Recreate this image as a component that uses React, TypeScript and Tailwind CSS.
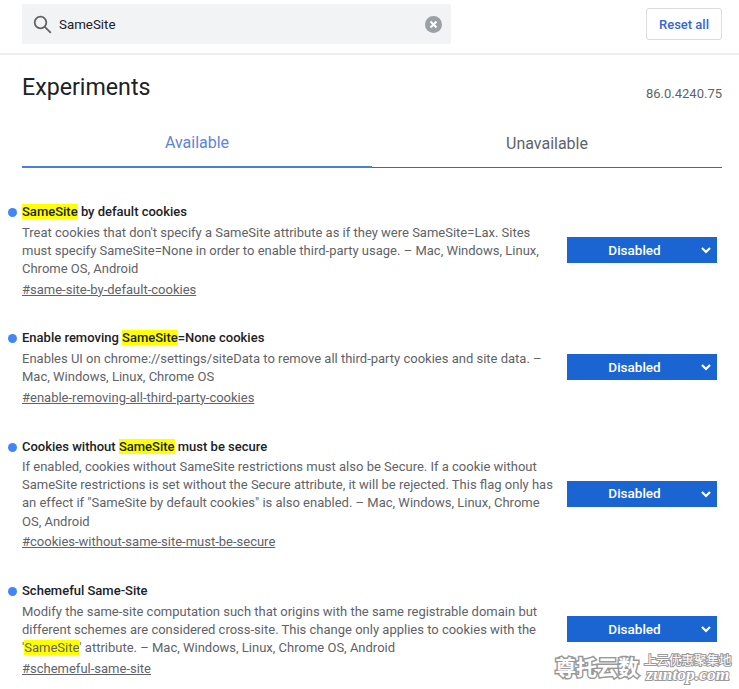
const flags = [
  {
    title: <><mark className="bg-[#ffff00] text-[#202124]">SameSite</mark> by default cookies</>,
    desc: <>Treat cookies that don't specify a SameSite attribute as if they were SameSite=Lax. Sites must specify SameSite=None in order to enable third-party usage. – Mac, Windows, Linux, Chrome OS, Android</>,
    link: "#same-site-by-default-cookies",
  },
  {
    title: <>Enable removing <mark className="bg-[#ffff00] text-[#202124]">SameSite</mark>=None cookies</>,
    desc: <>Enables UI on chrome://settings/siteData to remove all third-party cookies and site data. – Mac, Windows, Linux, Chrome OS</>,
    link: "#enable-removing-all-third-party-cookies",
  },
  {
    title: <>Cookies without <mark className="bg-[#ffff00] text-[#202124]">SameSite</mark> must be secure</>,
    desc: <>If enabled, cookies without SameSite restrictions must also be Secure. If a cookie without SameSite restrictions is set without the Secure attribute, it will be rejected. This flag only has an effect if "SameSite by default cookies" is also enabled. – Mac, Windows, Linux, Chrome OS, Android</>,
    link: "#cookies-without-same-site-must-be-secure",
  },
  {
    title: <>Schemeful Same-Site</>,
    desc: <>Modify the same-site computation such that origins with the same registrable domain but different schemes are considered cross-site. This change only applies to cookies with the '<mark className="bg-[#ffff00] text-[#5f6368]">SameSite</mark>' attribute. – Mac, Windows, Linux, Chrome OS, Android</>,
    link: "#schemeful-same-site",
  },
];

function FlagRow({ flag }: { flag: (typeof flags)[number] }) {
  return (
    <div className="flex items-center">
      <div className="w-[533px] shrink-0">
        <div className="relative text-[13px] leading-[18.2px] font-medium text-[#202124]">
          <span className="absolute left-[-14px] top-[5px] h-[9px] w-[9px] rounded-full bg-[#4285f4]" />
          {flag.title}
        </div>
        <p className="mt-[2.3px] text-[13px] leading-[18.2px] text-[#5f6368]">{flag.desc}</p>
        <a className="mt-[2.4px] block text-[13px] leading-[18.2px] text-[#5f6368] underline">{flag.link}</a>
      </div>
      <div className="mb-[2px] ml-[12px] flex h-[26px] w-[150px] items-center bg-[#1a65d1] text-[13.5px] font-medium text-white">
        <span className="flex-1 pl-[14px] text-center">Disabled</span>
        <svg className="mr-[5px] ml-[12px] h-[12px] w-[12px]" viewBox="0 0 12 12" fill="none" stroke="white" strokeWidth="2.2">
          <path d="M2 4l4 4 4-4" />
        </svg>
      </div>
    </div>
  );
}

export default function App() {
  return (
    <div className="relative h-[689px] w-[739px] overflow-hidden bg-white font-['Roboto',sans-serif]">
      <header className="flex h-[55px] items-start justify-between border-b-2 border-[#eeeeee] pl-[22px] pr-[17px] pt-[4px]">
        <div className="flex h-[40px] w-[429px] items-center rounded-[2px] bg-[#f1f3f4] pl-[11px] pr-[9px]">
          <svg className="h-[19px] w-[19px]" viewBox="0 0 19 19" fill="none" stroke="#5f6368" strokeWidth="1.8">
            <circle cx="7.5" cy="7.5" r="5.8" />
            <path d="M11.8 11.8l6 6" />
          </svg>
          <span className="ml-[7px] flex-1 pt-[1px] text-[13.33px] text-[#202124]">SameSite</span>
          <svg className="mt-[1px] h-[17px] w-[17px]" viewBox="0 0 17 17">
            <circle cx="8.5" cy="8.5" r="8.5" fill="#9aa0a6" />
            <path d="M5.5 5.5l6 6M11.5 5.5l-6 6" stroke="white" strokeWidth="2" />
          </svg>
        </div>
        <button className="mt-[4px] h-[32px] w-[76px] rounded-[3px] border border-[#dadce0] pt-[1px] text-[13px] font-medium text-[#3367d6]">
          Reset all
        </button>
      </header>

      <main className="pl-[22px] pr-[17px]">
        <div className="mt-[18px] flex h-[30px] items-end justify-between">
          <h1 className="self-start text-[23.2px] leading-[28px] text-[#202124]">Experiments</h1>
          <span className="text-[13px] leading-[18px] text-[#5f6368]">86.0.4240.75</span>
        </div>

        <div className="mt-[17px] flex h-[48px] w-[700px]">
          <div className="flex w-[350px] items-start justify-center border-b-2 border-[#4a7fd4] pt-[13px] text-[16px] leading-[20px] text-[#5c85d6]">
            Available
          </div>
          <div className="flex h-[48px] w-[350px] items-start justify-center border-b border-[#5f6368] pt-[14px] text-[16px] leading-[20px] text-[#5f6368]">
            Unavailable
          </div>
        </div>

        <div className="mt-[35px] flex flex-col gap-[30.7px]">
          {flags.map((flag) => (
            <FlagRow key={flag.link} flag={flag} />
          ))}
        </div>
      </main>

      {/* site watermark */}
      <div className="absolute left-[555px] top-[651px] flex items-center text-white">
        <span className="font-['Noto_Sans_CJK_SC',sans-serif] text-[21px] font-bold leading-[30px] [-webkit-text-stroke:3px_#999999] [paint-order:stroke_fill]">尊托云数</span>
        <div className="ml-[5px] flex flex-col items-center">
          <span className="font-['Noto_Sans_CJK_SC',sans-serif] text-[12.5px] leading-[15px] [-webkit-text-stroke:2px_#999999] [paint-order:stroke_fill]">上云优惠聚集地</span>
          <span className="font-['Liberation_Serif',serif] text-[17.5px] font-bold italic leading-[14px] [-webkit-text-stroke:2px_#999999] [paint-order:stroke_fill]">zuntop.com</span>
        </div>
      </div>
    </div>
  );
}
